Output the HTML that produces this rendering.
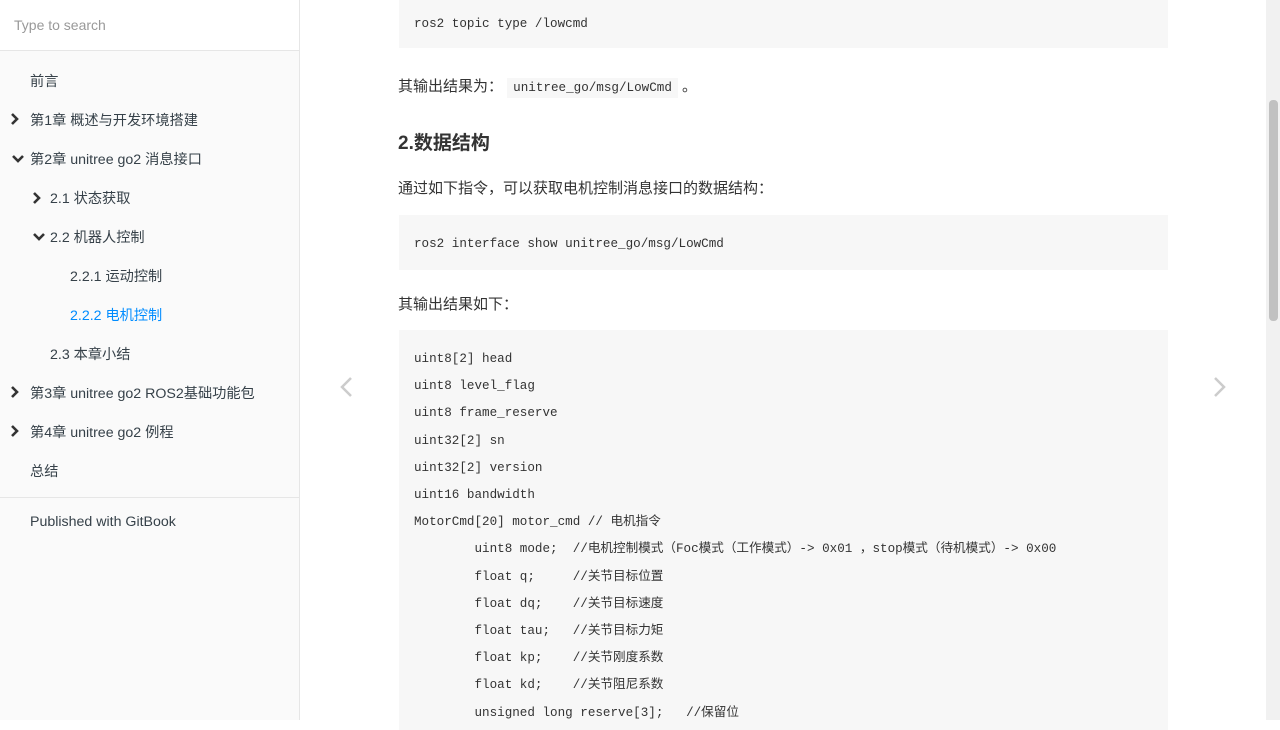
<!DOCTYPE html>
<html><head><meta charset="utf-8"><style>
*{margin:0;padding:0;box-sizing:border-box}
body{width:1280px;height:720px;overflow:hidden;background:#fff;font-family:"Liberation Sans","Noto Sans CJK SC",sans-serif;color:#333;position:relative}
.side{position:absolute;left:0;top:0;width:300px;height:720px;background:#fafafa;border-right:1px solid #e6e6e6}
.search{height:51px;background:#fff;border-bottom:1px solid #e6e6e6;padding:17px 14px;font-size:14px;color:#999}
.item{position:absolute;font-size:14.2px;color:#364149;white-space:nowrap}
.item.active{color:#008cff}
.arr{position:absolute;font-size:12px}
.sep{position:absolute;left:0;top:497px;width:299px;border-top:1px solid #e6e6e6}
.code{position:absolute;left:399px;width:769px;background:#f7f7f7;font-family:"Liberation Mono","Noto Sans CJK SC",monospace;font-size:12.6px;color:#333}
.p{position:absolute;left:398px;font-size:15px;color:#333;white-space:nowrap}
pre{font-family:inherit;font-size:12.6px;line-height:27.2px}
.ic{background:#f7f7f7;font-family:"Liberation Mono",monospace;font-size:12.6px;padding:3px 6px}
.sb{position:absolute;right:0;top:0;width:14px;height:720px;background:#f1f1f1}
.thumb{position:absolute;right:2px;top:100px;width:9px;height:221px;background:#c1c1c1;border-radius:4px}
</style></head><body>
<div class="side">
<div class="search">Type to search</div>
<svg class="arr" style="left:10px;top:113px" width="10" height="12"><path d="M2 1l5 5-5 5" stroke="#333" stroke-width="2.6" fill="none"/></svg>
<svg class="arr" style="left:12px;top:154px" width="12" height="10"><path d="M1 2l5 5 5-5" stroke="#333" stroke-width="2.6" fill="none"/></svg>
<svg class="arr" style="left:32px;top:192px" width="10" height="12"><path d="M2 1l5 5-5 5" stroke="#333" stroke-width="2.6" fill="none"/></svg>
<svg class="arr" style="left:33px;top:232px" width="12" height="10"><path d="M1 2l5 5 5-5" stroke="#333" stroke-width="2.6" fill="none"/></svg>
<svg class="arr" style="left:10px;top:386px" width="10" height="12"><path d="M2 1l5 5-5 5" stroke="#333" stroke-width="2.6" fill="none"/></svg>
<svg class="arr" style="left:10px;top:425px" width="10" height="12"><path d="M2 1l5 5-5 5" stroke="#333" stroke-width="2.6" fill="none"/></svg>
<div class="item" style="left:30px;top:71px">前言</div>
<div class="item" style="left:30px;top:110px">第1章 概述与开发环境搭建</div>
<div class="item" style="left:30px;top:149px">第2章 unitree go2 消息接口</div>
<div class="item" style="left:50px;top:188px">2.1 状态获取</div>
<div class="item" style="left:50px;top:227px">2.2 机器人控制</div>
<div class="item" style="left:70px;top:266px">2.2.1 运动控制</div>
<div class="item active" style="left:70px;top:305px">2.2.2 电机控制</div>
<div class="item" style="left:50px;top:344px">2.3 本章小结</div>
<div class="item" style="left:30px;top:383px">第3章 unitree go2 ROS2基础功能包</div>
<div class="item" style="left:30px;top:422px">第4章 unitree go2 例程</div>
<div class="item" style="left:30px;top:461px">总结</div>
<div class="sep"></div>
<div class="item" style="left:30px;top:514px">Published with GitBook</div>
</div>

<div class="code" style="top:0;height:48px;padding:16px 15px"><pre style="line-height:17px">ros2 topic type /lowcmd</pre></div>
<div class="p" style="top:75px">其输出结果为： <span class="ic">unitree_go/msg/LowCmd</span> 。</div>
<div class="p" style="top:128px;font-size:19px;font-weight:bold">2.数据结构</div>
<div class="p" style="top:177px">通过如下指令，可以获取电机控制消息接口的数据结构：</div>
<div class="code" style="top:215px;height:55px;padding:21px 15px"><pre style="line-height:17px">ros2 interface show unitree_go/msg/LowCmd</pre></div>
<div class="p" style="top:293px">其输出结果如下：</div>
<div class="code" style="top:330px;height:400px;padding:16px 15px"><pre>uint8[2] head
uint8 level_flag
uint8 frame_reserve
uint32[2] sn
uint32[2] version
uint16 bandwidth
MotorCmd[20] motor_cmd // 电机指令
        uint8 mode;  //电机控制模式（Foc模式（工作模式）-> 0x01 ，stop模式（待机模式）-> 0x00
        float q;     //关节目标位置
        float dq;    //关节目标速度
        float tau;   //关节目标力矩
        float kp;    //关节刚度系数
        float kd;    //关节阻尼系数
        unsigned long reserve[3];   //保留位</pre></div>

<svg style="position:absolute;left:338px;top:376px" width="16" height="22"><path d="M13 2L4 11l9 9" stroke="#ccc" stroke-width="2.5" fill="none"/></svg>
<svg style="position:absolute;left:1212px;top:376px" width="16" height="22"><path d="M3 2l9 9-9 9" stroke="#ccc" stroke-width="2.5" fill="none"/></svg>
<div class="sb"><div class="thumb"></div></div>
</body></html>
